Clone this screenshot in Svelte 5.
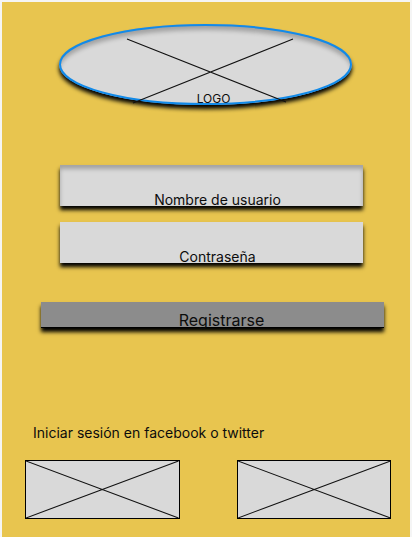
<script>
  let username = $state('');
  let password = $state('');
  const networks = ['facebook', 'twitter'];
</script>

<main>
  <div class="logo">
    <svg viewBox="0 0 293 81" preserveAspectRatio="none" aria-hidden="true">
      <ellipse cx="146.5" cy="40.5" rx="145.5" ry="39.5" />
      <path d="M68 15 L227 78 M234 15 L74 79" />
    </svg>
    <span>LOGO</span>
  </div>

  <form onsubmit={(e) => e.preventDefault()}>
    <input
      class="inner"
      type="text"
      aria-label="Nombre de usuario"
      placeholder="Nombre de usuario"
      bind:value={username}
    />
    <input
      type="password"
      aria-label="Contraseña"
      placeholder="Contraseña"
      bind:value={password}
    />
    <button type="submit">Registrarse</button>
  </form>

  <p>Iniciar sesión en facebook o twitter</p>

  <nav>
    {#each networks as network}
      <a href="#{network}" aria-label={network}>
        <svg viewBox="0 0 154 59" preserveAspectRatio="none" aria-hidden="true">
          <path d="M0 0 L154 59 M154 0 L0 59" />
        </svg>
      </a>
    {/each}
  </nav>
</main>

<style>
  :global(body) {
    background: #f5f5f5;
  }

  main {
    box-sizing: border-box;
    min-height: calc(100vh - 2px);
    margin: 2px 2px 0;
    padding: 22px 19px 18px 23px;
    display: flex;
    flex-direction: column;
    background: #e8c54f;
    color: #0c0c0c;
    font-family: Inter, 'Liberation Sans', sans-serif;
    font-size: 14px;
    line-height: 16px;
  }

  svg {
    display: block;
    fill: none;
    stroke: #111;
    stroke-width: 1.1;
  }

  .logo {
    position: relative;
    box-sizing: border-box;
    height: 81px;
    margin: 0 39px 0 34px;
    padding-left: 16px;
    display: flex;
    align-items: flex-end;
    justify-content: center;
    border-radius: 50%;
    background: #d9d9d9;
    box-shadow:
      0 4px 4px #000,
      inset 0 6px 4px rgba(0, 0, 0, 0.25);
    font-size: 12px;
    line-height: 12px;
  }

  .logo svg {
    position: absolute;
    inset: 0;
    width: 100%;
    height: 100%;
    overflow: visible;
  }

  .logo ellipse {
    stroke: #128ae8;
    stroke-width: 2;
    vector-effect: non-scaling-stroke;
  }

  form {
    margin-top: 60px;
    display: flex;
    flex-direction: column;
    gap: 16px;
  }

  input,
  button {
    box-sizing: border-box;
    border: 0;
    border-radius: 0;
    color: inherit;
    font: inherit;
    text-align: center;
    box-shadow: 0 4px 4px #000;
  }

  input {
    height: 41px;
    margin: 0 28px 0 35px;
    padding: 27px 0 0 12px;
    background: #d9d9d9;
  }

  input::placeholder {
    color: inherit;
    opacity: 1;
  }

  .inner {
    box-shadow:
      0 4px 4px #000,
      inset 0 4px 4px rgba(0, 0, 0, 0.25);
  }

  button {
    height: 26px;
    margin: 23px 7px 0 16px;
    padding: 10px 0 0 18px;
    border-bottom: 1px solid #000;
    background: #8c8c8c;
    font-size: 16px;
    line-height: 16px;
  }

  p {
    margin: 97px 0 0 8px;
  }

  nav {
    margin-top: 19px;
    display: flex;
    gap: 57px;
  }

  nav a {
    flex: 1;
    border: 1px solid #000;
    background: #d9d9d9;
  }

  nav svg {
    width: 100%;
    height: 57px;
  }
</style>
